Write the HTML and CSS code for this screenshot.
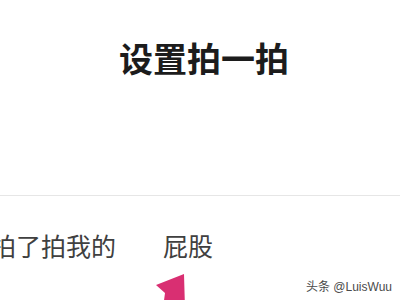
FILE: index.html
```html
<!DOCTYPE html>
<html lang="zh">
<head>
<meta charset="utf-8">
<link rel="stylesheet" href="styles.css">
</head>
<body>
<div class="page">
  <header class="head">
    <h1 class="title">设置拍一拍</h1>
  </header>
  <div class="row">
    <span class="label">拍了拍我的</span>
    <span class="value">屁股</span>
  </div>
  <svg class="arrow" width="40" height="34" viewBox="0 0 40 34">
    <polygon points="33,0 34,34 12,34 14,19 5,11" fill="#d92f72"/>
  </svg>
  <div class="mark">头条 @LuisWuu</div>
</div>
</body>
</html>
```
FILE: styles.css
```css
html, body {
  margin: 0;
  padding: 0;
  background: #ffffff;
}
.page {
  position: relative;
  width: 400px;
  height: 300px;
  overflow: hidden;
  font-family: "Noto Sans CJK SC", "Noto Sans", sans-serif;
}
.head {
  height: 196px;
  border-bottom: 1px solid #e6e6e6;
  box-sizing: border-box;
  padding-top: 38px;
  padding-left: 8px;
  text-align: center;
}
.title {
  margin: 0;
  font-size: 34px;
  line-height: 40px;
  font-weight: 700;
  color: #1c1c1c;
}
.row {
  display: flex;
  gap: 47px;
  margin-left: -9px;
  padding-top: 34px;
  font-size: 25px;
  line-height: 30px;
  color: #404040;
}
.arrow {
  position: absolute;
  left: 151px;
  top: 274px;
}
.mark {
  position: absolute;
  right: 8px;
  bottom: 6px;
  font-size: 12px;
  line-height: 14px;
  color: #4a4a4a;
  font-family: "Liberation Sans", "Noto Sans CJK SC", sans-serif;
}
```
